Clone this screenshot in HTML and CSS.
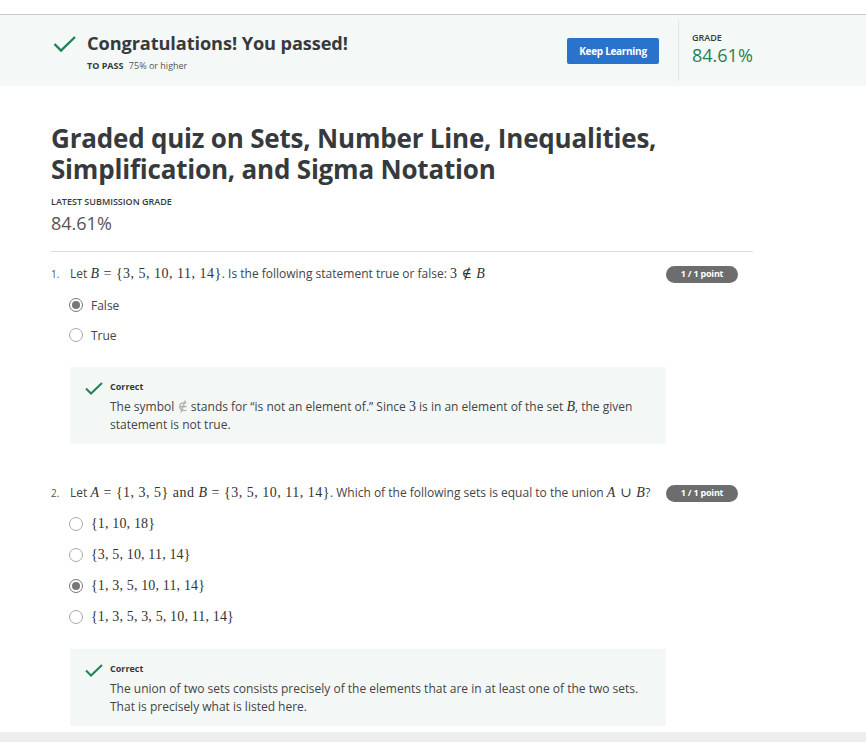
FILE: index.html
```html
<!DOCTYPE html>
<html>
<head>
<meta charset="utf-8">
<link rel="stylesheet" href="styles.css">
</head>
<body>
<div class="topbar"></div>
<div class="banner">
  <div class="pass">
    <svg class="check-lg" width="24" height="18" viewBox="0 0 24 18"><polyline points="1.5,9 8,15.5 22,2" fill="none" stroke="#1f8354" stroke-width="2.4"/></svg>
    <div class="pass-text">
      <div class="pass-title">Congratulations! You passed!</div>
      <div class="pass-sub"><b>TO PASS</b> 75% or higher</div>
    </div>
  </div>
  <button class="btn">Keep Learning</button>
  <div class="divider"></div>
  <div class="grade">
    <div class="label">GRADE</div>
    <div class="grade-val">84.61%</div>
  </div>
</div>

<div class="main">
  <h1 class="title">Graded quiz on Sets, Number Line, Inequalities, Simplification, and Sigma Notation</h1>
  <div class="label latest">LATEST SUBMISSION GRADE</div>
  <div class="latest-val">84.61%</div>
  <div class="hr"></div>

  <div class="question">
    <div class="q-row">
      <span class="q-num">1.</span>
      <span class="q-text">Let <span class="m"><i>B</i><span class="op">=</span>{3, 5, 10, 11, 14}</span>. Is the following statement true or false: <span class="m">3<span class="op">∉</span><i>B</i></span></span>
      <span class="badge">1 / 1 point</span>
    </div>
    <div class="options">
      <div class="opt"><span class="radio on"></span><span class="opt-label">False</span></div>
      <div class="opt"><span class="radio"></span><span class="opt-label">True</span></div>
    </div>
    <div class="feedback">
      <svg class="check-sm" width="18" height="13" viewBox="0 0 18 13"><polyline points="1,6.5 6,11.5 17,1" fill="none" stroke="#1f8354" stroke-width="2"/></svg>
      <div class="fb-body">
        <div class="fb-title">Correct</div>
        <div class="fb-text">The symbol <span class="m light">∉</span> stands for “is not an element of.” Since <span class="m">3</span> is in an element of the set <span class="m"><i>B</i></span>, the given statement is not true.</div>
      </div>
    </div>
  </div>

  <div class="question q2">
    <div class="q-row">
      <span class="q-num">2.</span>
      <span class="q-text">Let <span class="m"><i>A</i><span class="op">=</span>{1, 3, 5} and <i>B</i><span class="op">=</span>{3, 5, 10, 11, 14}</span>. Which of the following sets is equal to the union <span class="m"><i>A</i><span class="op">∪</span><i>B</i></span>?</span>
      <span class="badge">1 / 1 point</span>
    </div>
    <div class="options">
      <div class="opt"><span class="radio"></span><span class="opt-label m">{1, 10, 18}</span></div>
      <div class="opt"><span class="radio"></span><span class="opt-label m">{3, 5, 10, 11, 14}</span></div>
      <div class="opt"><span class="radio on"></span><span class="opt-label m">{1, 3, 5, 10, 11, 14}</span></div>
      <div class="opt"><span class="radio"></span><span class="opt-label m">{1, 3, 5, 3, 5, 10, 11, 14}</span></div>
    </div>
    <div class="feedback">
      <svg class="check-sm" width="18" height="13" viewBox="0 0 18 13"><polyline points="1,6.5 6,11.5 17,1" fill="none" stroke="#1f8354" stroke-width="2"/></svg>
      <div class="fb-body">
        <div class="fb-title">Correct</div>
        <div class="fb-text">The union of two sets consists precisely of the elements that are in at least one of the two sets. That is precisely what is listed here.</div>
      </div>
    </div>
  </div>
</div>
<div class="footer"></div>
</body>
</html>
```
FILE: styles.css
```css
* { box-sizing: border-box; }
html, body { margin: 0; padding: 0; }
body {
  font-family: "Open Sans", "DejaVu Sans", sans-serif;
  color: #373a3c;
  background: #fff;
  width: 866px;
  height: 742px;
  overflow: hidden;
  position: relative;
}
.topbar { height: 15px; border-bottom: 1px solid #c9c9c9; }
.banner {
  height: 71px;
  background: #f4f8f6;
  display: flex;
  align-items: center;
}
.pass { flex: 1; display: flex; align-items: flex-start; padding-left: 53px; margin-top: 2px; }
.check-lg { margin-top: 4px; margin-right: 10px; }
.pass-title { font-size: 18.2px; font-weight: 700; line-height: 24px; color: #373a3c; letter-spacing: -0.1px; }
.pass-sub { font-size: 9px; margin-top: 4px; color: #555; }
.pass-sub b { font-weight: 700; margin-right: 3px; color: #373a3c; }
.btn {
  width: 92px; height: 26px; margin-top: 1px;
  background: #2a73cc; color: #fff; border: 0; border-radius: 2px;
  font-family: "Open Sans", sans-serif; font-weight: 700; font-size: 10px; letter-spacing: -0.3px;
  padding: 0;
}
.divider { width: 1px; height: 61px; background: #e2e5e4; margin: 0 13px 0 19px; }
.grade { width: 174px; margin-top: -4px; }
.label { font-size: 9px; font-weight: 600; color: #373a3c; text-transform: uppercase; letter-spacing: 0; }
.grade-val { font-size: 18px; color: #1f8354; line-height: 22px; margin-top: 0; }

.main { padding-left: 51px; width: 753px; }
.title { font-size: 26px; font-weight: 700; line-height: 31px; margin: 37px 0 0 0; color: #373a3c; letter-spacing: -0.2px; }
.latest { margin-top: 10px; }
.latest-val { font-size: 18px; color: #555; margin-top: 4px; line-height: 22px; }
.hr { height: 1px; background: #ddd; margin-top: 17px; }

.question { margin-top: 13px; width: 687px; }
.q2 { margin-top: 40px; }
.q-row { display: flex; align-items: center; font-size: 12px; line-height: 18px; }
.q-num { width: 19px; font-size: 10px; color: #555; }
.q-text { color: #444; }
.q-text .m { letter-spacing: 0.5px; }
.badge {
  margin-left: auto; width: 72px; height: 17px; border-radius: 9px;
  background: #6d6d6d; color: #fff; font-size: 9px; font-weight: 700;
  display: flex; align-items: center; justify-content: center; letter-spacing: -0.2px;
}
.m { font-family: "Liberation Serif", "DejaVu Serif", serif; font-size: 14px; color: #333; line-height: 1; }
.m i { font-style: italic; }
.m .op { margin: 0 4px; }
.m.light { color: #aaa; }
.options { margin-left: 18px; margin-top: 15px; display: flex; flex-direction: column; gap: 16px; }
.q2 .options { margin-top: 12px; gap: 11px; }
.opt { display: flex; align-items: center; height: 14px; }
.q2 .opt { height: 20px; }
.radio {
  width: 14px; height: 14px; border-radius: 50%; border: 1px solid #a9a9a9;
  background: #fff; position: relative; flex: none;
}
.radio.on { border-color: #777; }
.radio.on::after {
  content: ""; position: absolute; left: 2px; top: 2px; width: 8px; height: 8px; border-radius: 50%; background: #777;
}
.opt-label { margin-left: 8px; font-size: 12px; color: #444; }
.opt-label.m { font-size: 14px; color: #333; letter-spacing: 0.15px; }

.feedback {
  margin-left: 19px; margin-top: 25px; width: 596px; background: #f3f8f6;
  display: flex; align-items: flex-start; padding: 14px 14px 10px 15px;
}
.q2 .feedback { margin-top: 22px; }
.check-sm { margin-top: 1px; margin-right: 7px; flex: none; }
.fb-title { font-size: 9px; font-weight: 700; color: #373a3c; line-height: 12px; }
.fb-text { font-size: 12px; line-height: 18px; color: #444; margin-top: 5px; }
.fb-text .m { font-size: 14px; }

.footer { position: absolute; left: 0; right: 0; bottom: 0; height: 10px; background: #eee; }
```
